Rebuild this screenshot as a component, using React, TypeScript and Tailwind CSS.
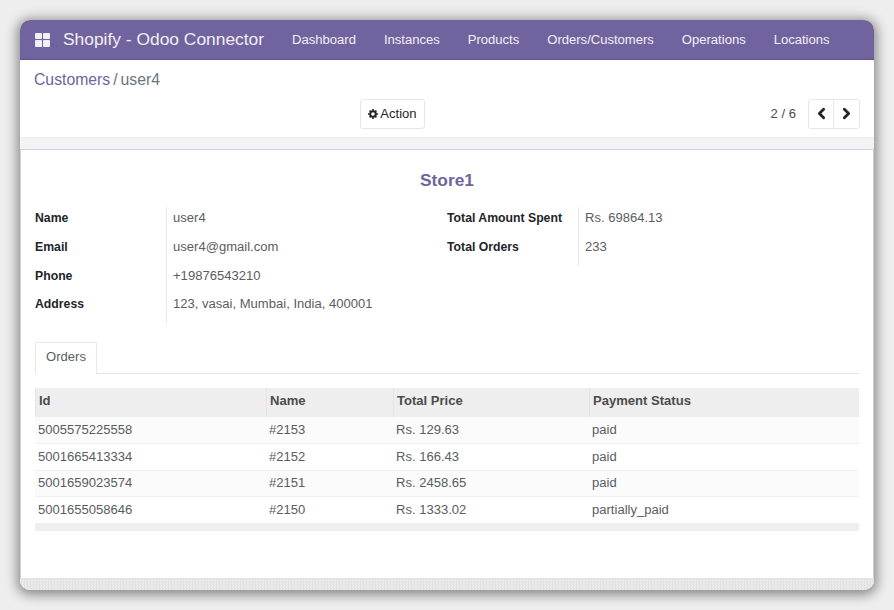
import { ChevronLeft, ChevronRight } from "lucide-react";

const navItems = ["Dashboard", "Instances", "Products", "Orders/Customers", "Operations", "Locations"];

const details = [
  { label: "Name", value: "user4", h: "h-[29px]" },
  { label: "Email", value: "user4@gmail.com", h: "h-[29px]" },
  { label: "Phone", value: "+19876543210", h: "h-[28px]" },
  { label: "Address", value: "123, vasai, Mumbai, India, 400001", h: "h-[30px]" },
];

const totals = [
  { label: "Total Amount Spent", value: "Rs. 69864.13", h: "h-[29px]" },
  { label: "Total Orders", value: "233", h: "h-[30px]" },
];

const orders = [
  { id: "5005575225558", name: "#2153", price: "Rs. 129.63", status: "paid", h: "h-[27px]" },
  { id: "5001665413334", name: "#2152", price: "Rs. 166.43", status: "paid", h: "h-[27px]" },
  { id: "5001659023574", name: "#2151", price: "Rs. 2458.65", status: "paid", h: "h-[26px]" },
  { id: "5001655058646", name: "#2150", price: "Rs. 1333.02", status: "partially_paid", h: "h-[27px]" },
];

const columns = [
  { title: "Id", w: "w-[231px]" },
  { title: "Name", w: "w-[127px]" },
  { title: "Total Price", w: "w-[196px]" },
  { title: "Payment Status", w: "w-[270px]" },
];

const GearIcon = () => (
  <svg viewBox="0 0 12 12" className="w-[10px] h-[10px]" fill="none">
    <circle cx="6" cy="6" r="3.4" stroke="#212529" strokeWidth="2.4" />
    <path
      d="M5 0h2v2H5zM5 10h2v2H5zM0 5h2v2H0zM10 5h2v2h-2zM1.2 2.6l1.4-1.4L4 2.6 2.6 4zM8 9.4 9.4 8l1.4 1.4-1.4 1.4zM1.2 9.4 2.6 8 4 9.4l-1.4 1.4zM8 2.6l1.4-1.4 1.4 1.4L9.4 4z"
      fill="#212529"
    />
  </svg>
);

const AppsIcon = () => (
  <div className="grid grid-cols-2 gap-[1px] w-[15px] h-[14px]">
    <span className="bg-white/90 rounded-[1px]" />
    <span className="bg-white/90 rounded-[1px]" />
    <span className="bg-white/90 rounded-[1px]" />
    <span className="bg-white/90 rounded-[1px]" />
  </div>
);

export default function App() {
  return (
    <div className="w-[894px] h-[610px] bg-[#eeeeee] p-[20px] overflow-hidden font-['Liberation_Sans',Arial,sans-serif] text-[13.06px] text-[#5a5d61]">
      <div className="w-[854px] h-[570px] rounded-[10px] flex flex-col overflow-hidden bg-white shadow-[0_2px_12px_3px_rgba(0,0,0,0.42)]">
        {/* Navbar */}
        <nav className="h-[40px] shrink-0 bg-[#71639e] border-b border-[#5f5389] flex items-center pl-[15px] text-white">
          <AppsIcon />
          <span className="ml-[13px] text-[17.4px] text-white/90">Shopify - Odoo Connector</span>
          <div className="flex ml-[28px] gap-[28px] text-white/90">
            {navItems.map((item) => (
              <span key={item}>{item}</span>
            ))}
          </div>
        </nav>

        {/* Control panel */}
        <div className="h-[78px] shrink-0 px-[14px] pt-[10px] border-b border-[#eeeeee]">
          <div className="text-[15.75px] leading-[20px] flex gap-[3px]">
            <span className="text-[#71639e]">Customers</span>
            <span className="text-[#6c757d]">/</span>
            <span className="text-[#6c757d]">user4</span>
          </div>
          <div className="flex items-center mt-[9px] h-[30px]">
            <button className="ml-[326px] w-[65px] h-[30px] bg-white border border-[#e6e6ea] rounded-[3px] flex items-center justify-center gap-[2px] text-[#212529]">
              <GearIcon />
              Action
            </button>
            <span className="ml-auto text-[#4c4c4c]">2 / 6</span>
            <div className="ml-[12px] flex h-[30px] border border-[#e6e6ea] rounded-[3px] bg-white text-[#212529]">
              <span className="w-[25px] flex items-center justify-center border-r border-[#e6e6ea] pb-[1px]">
                <ChevronLeft size={17} strokeWidth={4} />
              </span>
              <span className="w-[25px] flex items-center justify-center pb-[1px]">
                <ChevronRight size={17} strokeWidth={4} />
              </span>
            </div>
          </div>
        </div>

        {/* Strip above the sheet */}
        <div className="h-[12px] shrink-0 bg-[#f3f3f5] border-b border-[#d4d3dc]" />

        {/* Form sheet */}
        <div className="flex-1 border-l border-r border-[#cfcfda] px-[14px] pt-[20px]">
          <h2 className="text-center text-[#71639e] text-[17.33px] leading-[20px] font-bold">Store1</h2>

          <div className="flex mt-[17px] h-[116px]">
            <div className="w-[412px] shrink-0">
              {details.map((d) => (
                <div key={d.label} className={`flex ${d.h}`}>
                  <span className="w-[131px] shrink-0 font-bold text-[12.25px] text-[#212529] pt-[2px]">{d.label}</span>
                  <span className="pl-[6px] border-l border-[#e8e8e8] pt-[1px]">{d.value}</span>
                </div>
              ))}
            </div>
            <div>
              {totals.map((d) => (
                <div key={d.label} className={`flex ${d.h}`}>
                  <span className="w-[131px] shrink-0 font-bold text-[12.25px] text-[#212529] pt-[2px]">{d.label}</span>
                  <span className="pl-[6px] border-l border-[#e8e8e8] pt-[1px]">{d.value}</span>
                </div>
              ))}
            </div>
          </div>

          {/* Tabs */}
          <div className="mt-[19px] h-[32px] border-b border-[#e4e4e4] flex">
            <div className="w-[62px] h-[32px] bg-white border border-b-0 border-[#e8e8e8] flex items-center justify-center pb-[3px]">
              Orders
            </div>
          </div>

          {/* Orders table */}
          <table className="mt-[14px] w-[824px] table-fixed border-separate border-spacing-0">
            <thead>
              <tr className="h-[29px] bg-[#eeeeee] text-[#4c4c4c]">
                {columns.map((c) => (
                  <th key={c.title} className={`${c.w} text-left font-bold pl-[3px] pb-[3px] border-l border-[#e4e4e4]`}>
                    {c.title}
                  </th>
                ))}
              </tr>
            </thead>
            <tbody>
              {orders.map((o, i) => (
                <tr key={o.id} className={`${o.h} ${i % 2 === 0 ? "bg-[#fbfbfb]" : "bg-white"}`}>
                  <td className="pl-[3px] pb-[1px] border-b border-[#f0f0f0]">{o.id}</td>
                  <td className="pl-[3px] pb-[1px] border-b border-[#f0f0f0]">{o.name}</td>
                  <td className="pl-[3px] pb-[1px] border-b border-[#f0f0f0]">{o.price}</td>
                  <td className="pl-[3px] pb-[1px] border-b border-[#f0f0f0]">{o.status}</td>
                </tr>
              ))}
            </tbody>
          </table>
          <div className="h-[7px] w-[824px] bg-[#efefef]" />
        </div>

        {/* Bottom dithered strip */}
        <div className="h-[12px] shrink-0 border-t border-[#e2e2e8] bg-[#e6e6e6] bg-[repeating-conic-gradient(#e1e1e1_0_25%,#ececec_0_50%)] bg-[length:3px_3px]" />
      </div>
    </div>
  );
}
